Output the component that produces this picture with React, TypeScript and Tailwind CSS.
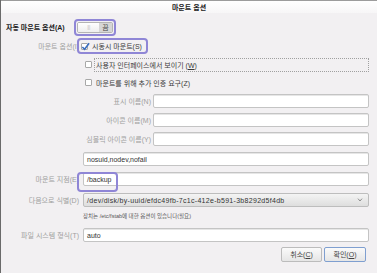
import React from 'react';

const font = "font-['Liberation_Sans','Noto_Sans_CJK_KR',sans-serif]";

const Check: React.FC<{ checked?: boolean }> = ({ checked }) => (
  <span className="relative inline-block w-[7px] h-[7px] border border-[#a8a8a8] bg-white rounded-[1px] shrink-0">
    {checked && (
      <svg viewBox="0 0 10 10" className="absolute -left-[1px] -top-[2px] w-[9px] h-[9px]">
        <path d="M1.5 5.5 L4 8 L9 1.5" fill="none" stroke="#3b6fc0" strokeWidth="1.8" />
      </svg>
    )}
  </span>
);

const Input: React.FC<{ value?: string; className?: string }> = ({ value = '', className = '' }) => (
  <div className={`h-[14px] flex-1 bg-white border border-[#c4c4c4] rounded-[2px] shadow-[inset_0_1px_0_#e6e6e6] flex items-center px-[3px] text-[#333] ${className}`}>
    {value}
  </div>
);

const Row: React.FC<{ label: string; className?: string; children: React.ReactNode }> = ({ label, className = '', children }) => (
  <div className={`flex items-center ${className}`}>
    <div className="w-[78px] shrink-0 text-right text-[#a0a0a0] whitespace-nowrap">{label}</div>
    <div className="flex-1 flex items-center pl-[4px] relative">{children}</div>
  </div>
);

const Sub: React.FC<{ label: string; className?: string }> = ({ label, className = '' }) => (
  <Row label="" className={`h-[14px] ${className}`}>
    <div className="w-[70px] shrink-0 text-right text-[#a0a0a0] whitespace-nowrap pr-[2px]">{label}</div>
    <Input />
  </Row>
);

export default function App() {
  return (
    <div className={`w-[377px] h-[273px] bg-[#f2f0f2] border-l border-[#6a6a6a] flex flex-col text-[7px] leading-none text-[#3a3a3a] ${font}`}>
      {/* title bar */}
      <div className="h-[13px] shrink-0 border-t border-[#9c9c9c] bg-gradient-to-b from-white to-[#f7f6f7] flex items-center justify-center font-bold text-[#222]">
        마운트 옵션
      </div>

      <div className="flex flex-col pr-[8px]">
        {/* auto mount toggle */}
        <div className="h-[17px] mt-[6px] flex items-center">
          <div className="w-[68px] pl-[5px] font-bold text-[#222] whitespace-nowrap">자동 마운트 옵션(A)</div>
          <div className="ml-[5px] w-[42px] h-[17px] border-2 border-[#8f86d6] rounded-[4px] flex items-center px-[1px]">
            <div className="flex-1 h-[11px] flex border border-[#b4b4b4] rounded-[2px] overflow-hidden">
              <div className="w-[21px] bg-gradient-to-b from-white to-[#eeeeee] flex items-center justify-center text-[#c2c2c2] text-[5px] tracking-[-0.5px]">
                |||
              </div>
              <div className="flex-1 bg-[#d6d6d6] flex items-center justify-center text-[#444]">끔</div>
            </div>
          </div>
        </div>

        {/* mount options */}
        <Row label="마운트 옵션(I)" className="h-[16px] mt-[2px]">
          <div className="-ml-[6px] w-[71px] h-[16px] border-2 border-[#8f86d6] rounded-[4px] flex items-center pl-[2px] gap-[4px] text-[#3a3a3a]">
            <Check checked />
            <span className="whitespace-nowrap">시동시 마운트(S)</span>
          </div>
        </Row>

        <Row label="" className="h-[14px] mt-[4px]">
          <div className="flex items-center w-full">
            <span className="ml-[2px]"><Check /></span>
            <div className="ml-[2px] flex-1 h-[14px] border border-dotted border-[#a0a0a0] flex items-center pl-[1px] whitespace-nowrap">
              사용자 인터페이스에서 보이기 (<span className="underline">W</span>)
            </div>
          </div>
        </Row>

        <Row label="" className="h-[14px] mt-[4px]">
          <div className="flex items-center">
            <span className="ml-[2px]"><Check /></span>
            <span className="ml-[4px] whitespace-nowrap">마운트를 위해 추가 인증 요구(Z)</span>
          </div>
        </Row>

        <Sub label="표시 이름(N)" className="mt-[4px]" />
        <Sub label="아이콘 이름(M)" className="mt-[5px]" />
        <Sub label="심볼릭 아이콘 이름(Y)" className="mt-[5px]" />

        <Row label="" className="h-[14px] mt-[6px]">
          <Input value="nosuid,nodev,nofail" />
        </Row>

        <Row label="마운트 지점(E)" className="h-[20px] mt-[3px]">
          <Input value="/backup" />
          <div className="absolute -left-[2px] top-0 w-[41px] h-[20px] border-2 border-[#8f86d6] rounded-[4px]" />
        </Row>

        <Row label="다음으로 식별(D)" className="h-[14px] mt-[4px]">
          <div className="flex-1 h-[14px] border border-[#bdbdbd] rounded-[2px] bg-gradient-to-b from-[#f4f4f4] to-[#dedede] flex items-center px-[3px] text-[#333]">
            <span className="flex-1 whitespace-nowrap tracking-[0.3px]">/dev/disk/by-uuid/efdc49fb-7c1c-412e-b591-3b8292d5f4db</span>
            <svg viewBox="0 0 8 6" className="w-[6px] h-[4px] mr-[2px]">
              <path d="M1 1 L4 4.5 L7 1" fill="none" stroke="#777" strokeWidth="1.2" />
            </svg>
          </div>
        </Row>

        <Row label="" className="h-[8px] mt-[6px]">
          <span className="text-[5.5px] text-[#555] whitespace-nowrap">장치는 /etc/fstab에 대한 옵션이 있습니다(필요)</span>
        </Row>

        <Row label="파일 시스템 형식(T)" className="h-[14px] mt-[7px]">
          <Input value="auto" />
        </Row>

        <div className="h-[15px] mt-[5px] flex justify-end gap-[2px] pr-[3px]">
          <button className="w-[41px] h-[15px] border border-[#bcbcbc] rounded-[2px] bg-gradient-to-b from-[#fafafa] to-[#e6e6e6] text-[#444]">
            취소(<span className="underline">C</span>)
          </button>
          <button className="w-[42px] h-[15px] border border-[#7f9fd0] rounded-[2px] bg-gradient-to-b from-[#fafafa] to-[#e6e6e6] text-[#444]">
            확인(<span className="underline">O</span>)
          </button>
        </div>
      </div>
    </div>
  );
}
